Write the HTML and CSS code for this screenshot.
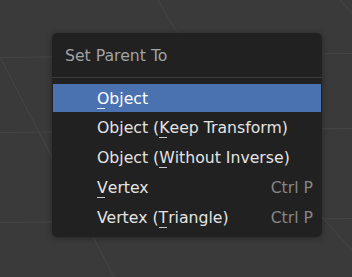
FILE: index.html
```html
<!DOCTYPE html>
<html>
<head>
<meta charset="utf-8">
<link rel="stylesheet" href="styles.css">
</head>
<body>
<svg class="grid" width="352" height="277" viewBox="0 0 352 277">
  <g stroke="#464646" stroke-width="1" fill="none">
    <line x1="0" y1="57.5" x2="352" y2="53.5"/>
    <line x1="0" y1="132.5" x2="352" y2="128.5"/>
    <line x1="0" y1="222.5" x2="352" y2="218.5"/>
    <line x1="0" y1="57" x2="114" y2="277"/>
    <line x1="158" y1="0" x2="190" y2="55"/>
    <line x1="250" y1="138" x2="352" y2="250"/>
    <line x1="340" y1="0" x2="354" y2="15"/>
  </g>
</svg>
<div class="menu">
  <div class="menu-title">Set Parent To</div>
  <div class="menu-sep"></div>
  <div class="menu-items">
    <div class="item active"><span class="label"><span class="mn">O</span>bject</span></div>
    <div class="item"><span class="label">Object (<span class="mn">K</span>eep Transform)</span></div>
    <div class="item"><span class="label">Object (<span class="mn">W</span>ithout Inverse)</span></div>
    <div class="item"><span class="label"><span class="mn">V</span>ertex</span><span class="key">Ctrl P</span></div>
    <div class="item"><span class="label">Vertex (<span class="mn">T</span>riangle)</span><span class="key">Ctrl P</span></div>
  </div>
</div>
</body>
</html>
```
FILE: styles.css
```css
html, body {
  margin: 0;
  padding: 0;
}
body {
  width: 352px;
  height: 277px;
  overflow: hidden;
  background: #3a3a3a;
  font-family: "DejaVu Sans", sans-serif;
  font-size: 15.7px;
  position: relative;
  padding: 33px 0 0 52px;
  box-sizing: border-box;
}
.grid {
  position: absolute;
  left: 0;
  top: 0;
}
.menu {
  position: relative;
  width: 270px;
  height: 204px;
  background: #212121;
  border-radius: 5px;
  box-shadow: 0 1px 6px rgba(0, 0, 0, 0.35);
  box-sizing: border-box;
  display: flex;
  flex-direction: column;
}
.menu-title {
  height: 44px;
  display: flex;
  align-items: center;
  padding-left: 13px;
  color: #a3a3a3;
}
.menu-sep {
  height: 1px;
  background: #3c3c3c;
}
.menu-items {
  display: flex;
  flex-direction: column;
  gap: 1.75px;
  padding: 6px 1px 0 1px;
}
.item {
  height: 28px;
  display: flex;
  align-items: center;
  justify-content: space-between;
  padding: 0 8px 0 44px;
  color: #e4e4e4;
}
.item.active {
  background: #4a72b0;
  color: #ffffff;
}
.key {
  color: #868686;
}
.mn {
  position: relative;
}
.mn::after {
  content: "";
  position: absolute;
  left: 0;
  bottom: -1px;
  width: 8px;
  height: 1px;
  background: currentColor;
  opacity: 0.85;
}
```
